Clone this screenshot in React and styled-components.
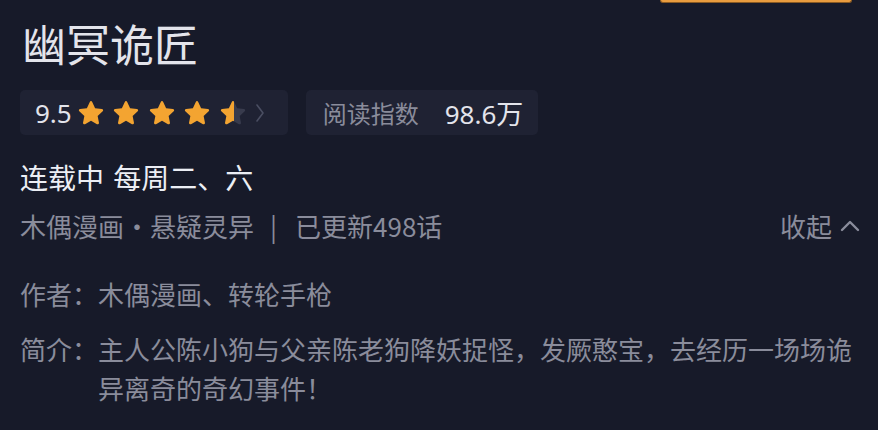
import React from "react";
import styled, { createGlobalStyle } from "styled-components";

const Global = createGlobalStyle`
  html, body { margin: 0; padding: 0; background: #171a29; }
  body { font-family: "Noto Sans CJK SC", "Noto Sans", sans-serif; }
`;

const Page = styled.div`
  width: 878px;
  height: 430px;
  overflow: hidden;
  background: #171a29;
  padding: 0 20px;
  box-sizing: border-box;
  display: flex;
  flex-direction: column;
`;

const TopBar = styled.div`
  display: flex;
  justify-content: flex-end;
  height: 3px;
  margin-right: 6px;
`;

const OrangeTab = styled.div`
  width: 190px;
  height: 2px;
  background: #e99c3f;
  border: 1px solid #8a5a22;
  border-top: none;
  border-radius: 0 0 4px 4px;
`;

const Title = styled.h1`
  margin: 13px 0 0 2px;
  font-size: 44px;
  line-height: 54px;
  font-weight: 400;
  color: #e3e4eb;
`;

const StatsRow = styled.div`
  display: flex;
  gap: 18px;
  margin-top: 20px;
`;

const StatBox = styled.div`
  height: 45px;
  box-sizing: border-box;
  padding: 0 ${(p) => p.$pr}px 0 ${(p) => p.$pl}px;
  background: #1f2233;
  border-radius: 5px;
  display: flex;
  align-items: center;
`;

const Score = styled.span`
  font-family: "Noto Sans", sans-serif;
  font-size: 26px;
  color: #e3e4eb;
  margin-right: 5px;
`;

const Stars = styled.div`
  display: flex;
  gap: 7.5px;
  align-items: center;
`;

const Chevron = styled.svg`
  margin-left: 8px;
  display: block;
`;

const StatLabel = styled.span`
  font-size: 24px;
  color: #8a8c9b;
`;

const StatValue = styled.span`
  font-family: "Noto Sans", "Noto Sans CJK SC", sans-serif;
  font-size: 26px;
  color: #e3e4eb;
  margin-left: 26px;
`;

const StatValueUnit = styled.span`
  font-family: "Noto Sans CJK SC", sans-serif;
  font-size: 27px;
`;

const StatusLine = styled.div`
  margin-top: 22px;
  font-size: 28px;
  line-height: 40px;
  color: #eceef4;
  word-spacing: 3px;
`;

const MetaRow = styled.div`
  margin: 9px -2px 0 0;
  display: flex;
  justify-content: space-between;
  align-items: center;
  font-size: 26px;
  line-height: 40px;
  color: #8a8c9b;
`;

const Sep = styled.span`
  margin: 0 18px 0 16px;
`;

const Collapse = styled.span`
  display: flex;
  align-items: center;
  gap: 8px;
`;

const InfoRow = styled.div`
  display: grid;
  grid-template-columns: 78px 1fr;
  margin-top: ${(p) => p.$mt}px;
  font-size: 26px;
  line-height: 39px;
  color: #8a8c9b;
`;

const Label = styled.span``;
const Body = styled.span``;

const STAR =
  "M12 1.8c.45 0 .85.27 1.03.68l2.5 5.37 5.86.7c.45.06.83.37.96.8.14.43 0 .9-.33 1.2l-4.33 4.02 1.15 5.8c.09.44-.09.9-.46 1.160-.37.26-.85.28-1.24.06L12 18.72l-5.14 2.87c-.39.22-.87.2-1.24-.06-.37-.26-.55-.72-.46-1.16l1.15-5.8-4.33-4.02c-.33-.3-.47-.77-.33-1.2.13-.43.51-.74.96-.8l5.86-.7 2.5-5.37c.18-.41.58-.68 1.03-.68z";

function Star({ half, id }) {
  return (
    <svg width="28" height="28" viewBox="0 0 24 24" style={{ display: "block" }}>
      {half && (
        <defs>
          <linearGradient id={id} x1="0" x2="1" y1="0" y2="0">
            <stop offset="0.53" stopColor="#f3a431" />
            <stop offset="0.53" stopColor="#383b4d" />
          </linearGradient>
        </defs>
      )}
      <path d={STAR} fill={half ? `url(#${id})` : "#f3a431"} />
    </svg>
  );
}

export default function App() {
  return (
    <>
      <Global />
      <Page>
        <TopBar>
          <OrangeTab />
        </TopBar>
        <Title>幽冥诡匠</Title>
        <StatsRow>
          <StatBox $pl={15} $pr={23}>
            <Score>9.5</Score>
            <Stars>
              <Star />
              <Star />
              <Star />
              <Star />
              <Star half id="halfstar" />
            </Stars>
            <Chevron width="10" height="20" viewBox="0 0 10 20">
              <path d="M2 2l6 8-6 8" fill="none" stroke="#4a4e62" strokeWidth="1.6" strokeLinecap="round" strokeLinejoin="round" />
            </Chevron>
          </StatBox>
          <StatBox $pl={17} $pr={15}>
            <StatLabel>阅读指数</StatLabel>
            <StatValue>
              98.6<StatValueUnit>万</StatValueUnit>
            </StatValue>
          </StatBox>
        </StatsRow>
        <StatusLine>连载中 每周二、六</StatusLine>
        <MetaRow>
          <span>
            木偶漫画·悬疑灵异<Sep>|</Sep>已更新498话
          </span>
          <Collapse>
            收起
            <svg width="20" height="12" viewBox="0 0 20 12">
              <path d="M2 10l8-8 8 8" fill="none" stroke="#8a8c9b" strokeWidth="2.4" strokeLinecap="round" strokeLinejoin="round" />
            </svg>
          </Collapse>
        </MetaRow>
        <InfoRow $mt={28}>
          <Label>作者：</Label>
          <Body>木偶漫画、转轮手枪</Body>
        </InfoRow>
        <InfoRow $mt={16}>
          <Label>简介：</Label>
          <Body>主人公陈小狗与父亲陈老狗降妖捉怪，发厥憨宝，去经历一场场诡异离奇的奇幻事件！</Body>
        </InfoRow>
      </Page>
    </>
  );
}
